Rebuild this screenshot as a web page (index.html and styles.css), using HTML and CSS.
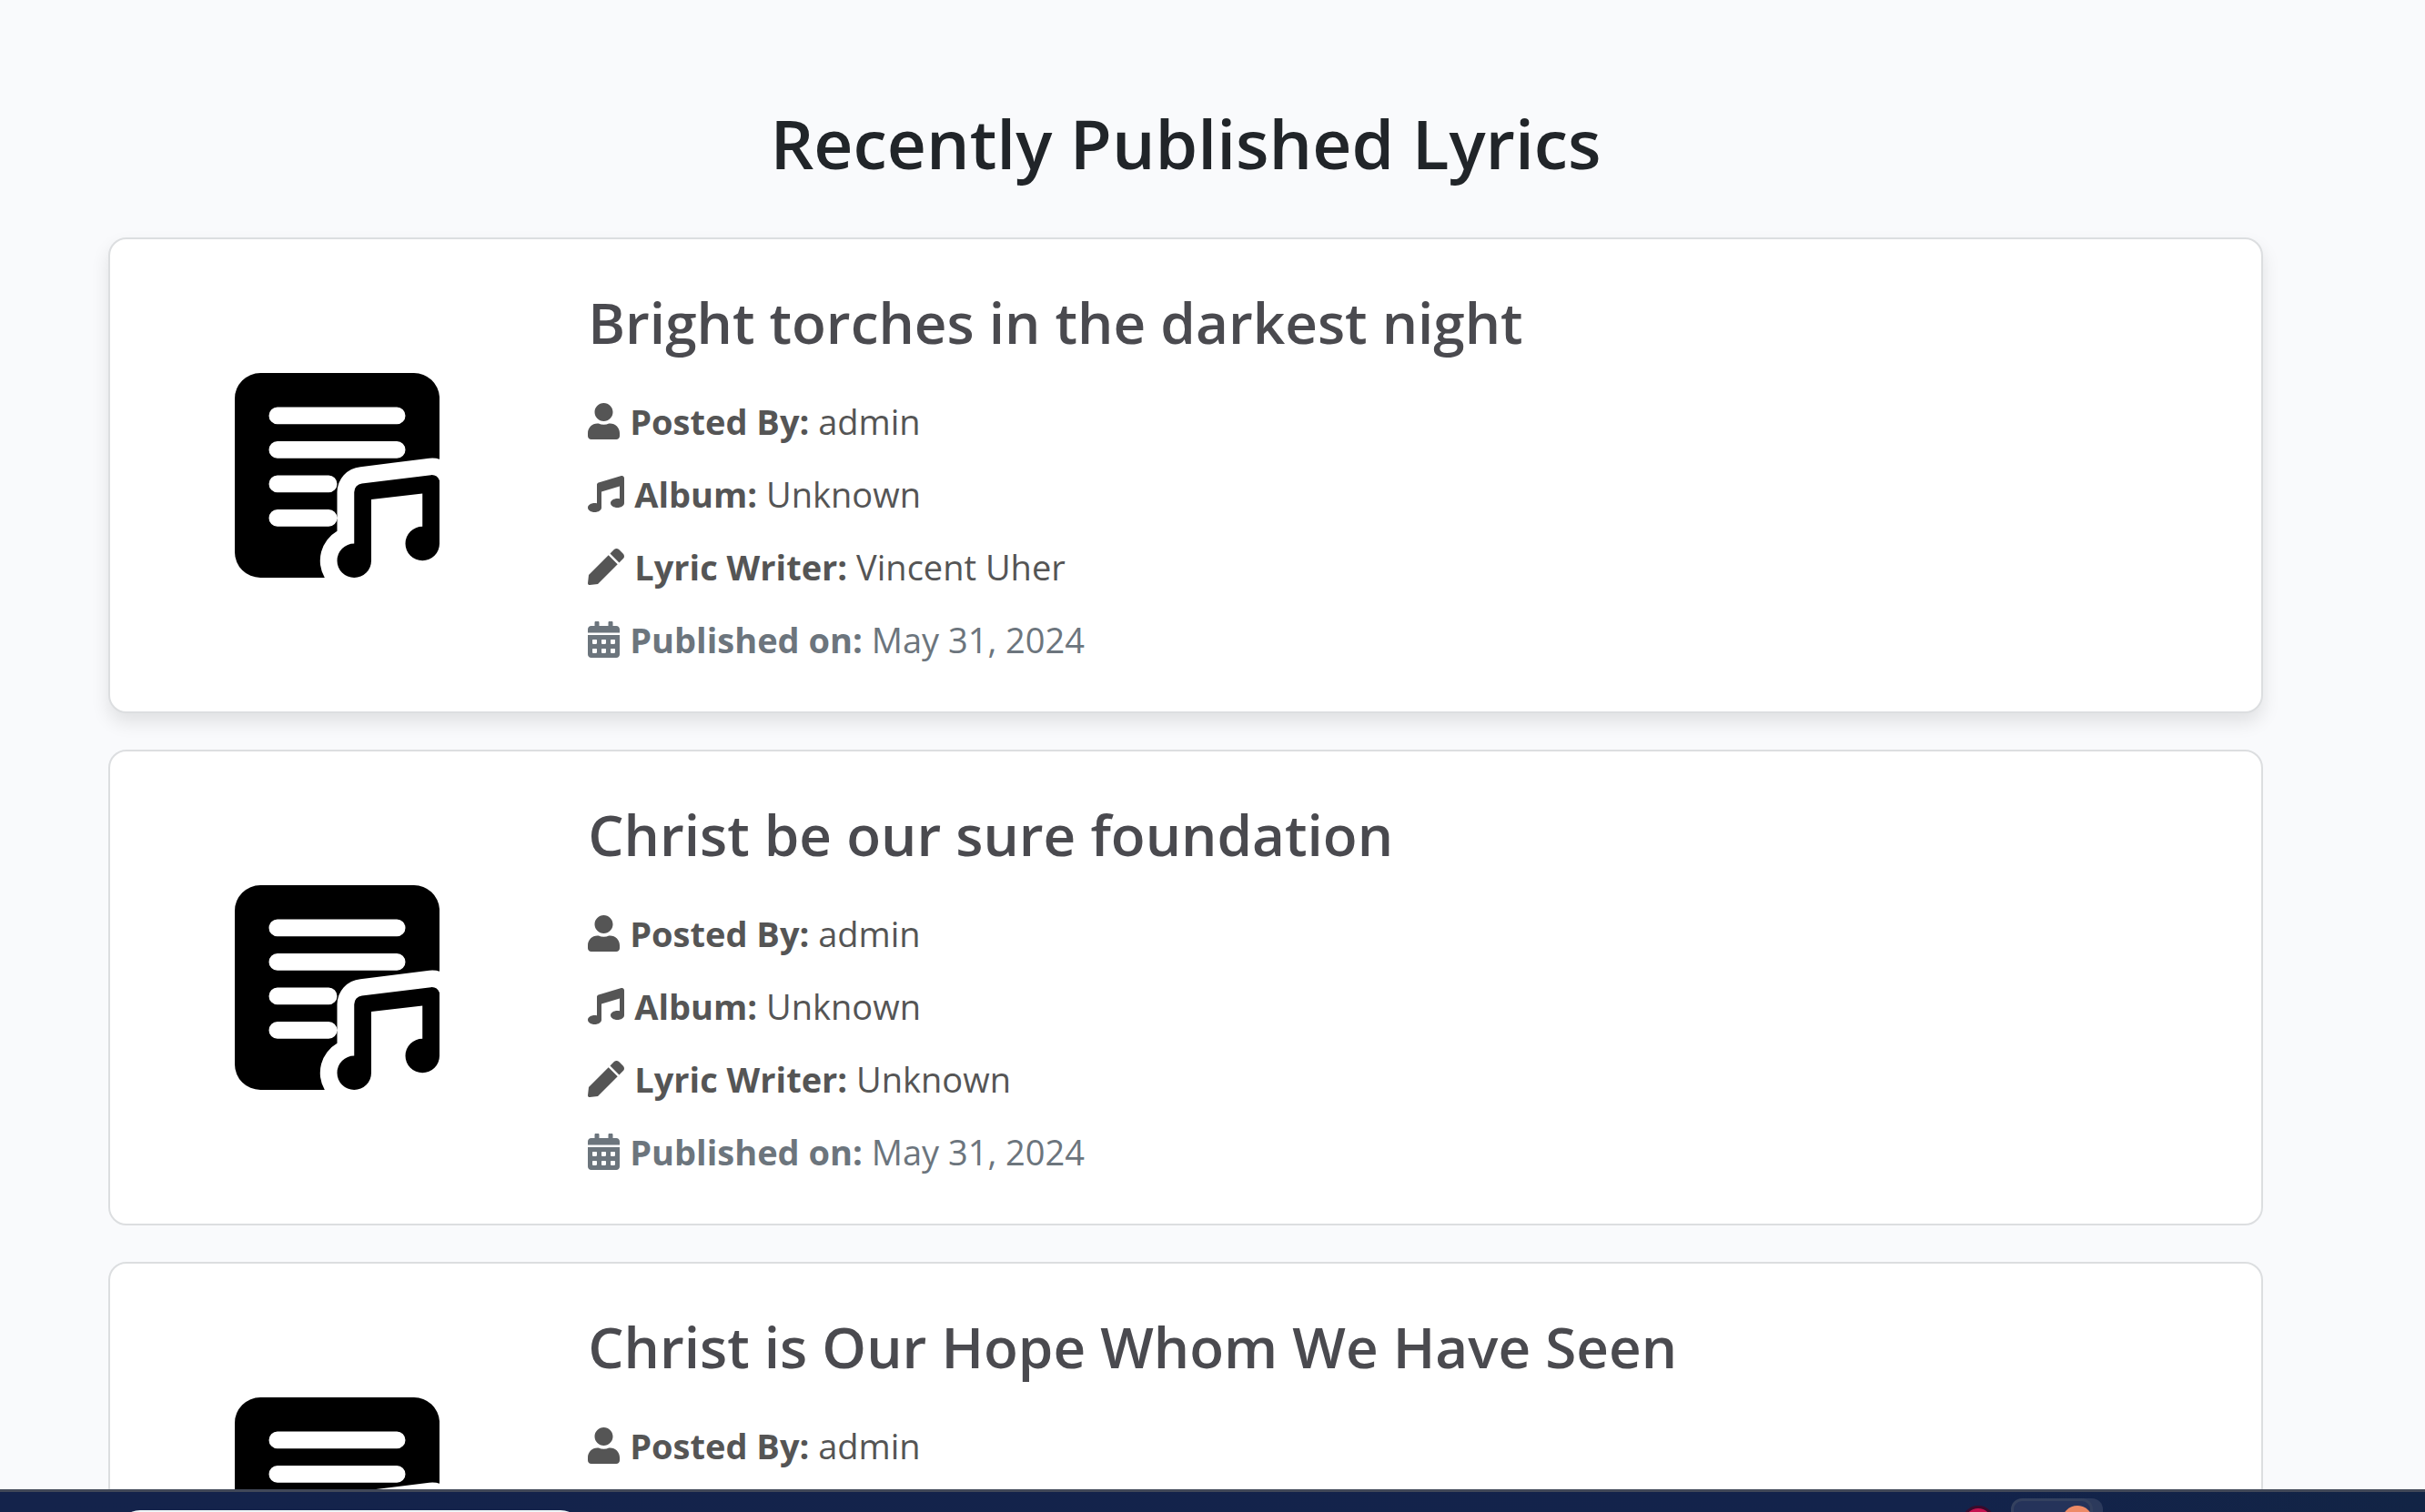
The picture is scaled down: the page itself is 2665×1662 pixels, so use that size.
FILE: index.html
```html
<!DOCTYPE html>
<html lang="en">
<head>
<meta charset="utf-8">
<title>Recently Published Lyrics</title>
<link rel="stylesheet" href="styles.css">
</head>
<body>
<svg class="sprite" aria-hidden="true">
  <symbol id="lyrics" viewBox="0 0 12 12">
    <path fill-rule="evenodd" d="M1.5 0h9A1.5 1.5 0 0 1 12 1.4V5.05Q11.75 4.97 11.4 5L7.36 5.5A1.5 1.5 0 0 0 6 7V9.27A2 2 0 0 0 5.27 12H1.5A1.5 1.5 0 0 1 0 10.5v-9A1.5 1.5 0 0 1 1.5 0zM2.5 2a.5.5 0 0 0 0 1h7a.5.5 0 0 0 0-1zM2.5 4a.5.5 0 0 0 0 1h7a.5.5 0 0 0 0-1zM2.5 6a.5.5 0 0 0 0 1h3a.5.5 0 0 0 0-1zM2.5 8a.5.5 0 0 0 0 1h3a.5.5 0 0 0 0-1z"/>
    <path d="M7.45 6.48L11.5 5.98A.5.5 0 0 1 12 6.3V10a1 1 0 1 1-1-1V7.06L8 7.41V11a1 1 0 1 1-1-1V6.98A.5.5 0 0 1 7.45 6.48z"/>
  </symbol>
  <symbol id="user" viewBox="0 0 448 512">
    <path d="M224 256c70.700 0 128-57.300 128-128S294.700 0 224 0 96 57.300 96 128s57.300 128 128 128zm89.600 32h-16.700c-22.200 10.200-46.900 16-72.900 16s-50.600-5.800-72.900-16h-16.700C60.200 288 0 348.200 0 422.400V464c0 26.500 21.500 48 48 48h352c26.500 0 48-21.500 48-48v-41.600c0-74.200-60.200-134.400-134.400-134.400z"/>
  </symbol>
  <symbol id="music" viewBox="0 0 512 512">
    <path d="M499.100 6.300c8.100 6 12.900 15.600 12.900 25.700V384c0 35.300-43 64-96 64s-96-28.700-96-64 43-64 96-64c11.200 0 22 1.300 32 3.700V147L192 223.800V448c0 35.300-43 64-96 64s-96-28.700-96-64 43-64 96-64c11.200 0 22 1.300 32 3.700V128c0-14.100 9.300-26.600 22.800-30.700l320-96c9.700-2.900 20.200-1.100 28.300 5z"/>
  </symbol>
  <symbol id="pen" viewBox="0 0 512 512">
    <path d="M290.740 93.240l128.020 128.020-277.990 277.990-114.140 12.600C11.350 513.540-1.560 500.620.140 485.340l12.700-114.220 277.900-277.880zm207.200-19.060l-60.110-60.110c-18.750-18.750-49.160-18.750-67.910 0l-56.550 56.550 128.020 128.020 56.550-56.550c18.750-18.760 18.750-49.160 0-67.910z"/>
  </symbol>
  <symbol id="calendar" viewBox="0 0 448 512">
    <path fill-rule="evenodd" d="M0 464c0 26.500 21.500 48 48 48h352c26.500 0 48-21.500 48-48V192H0v272zm320-196c0-6.600 5.400-12 12-12h40c6.600 0 12 5.400 12 12v40c0 6.600-5.400 12-12 12h-40c-6.600 0-12-5.400-12-12v-40zm0 128c0-6.600 5.400-12 12-12h40c6.600 0 12 5.400 12 12v40c0 6.600-5.400 12-12 12h-40c-6.600 0-12-5.400-12-12v-40zM192 268c0-6.600 5.400-12 12-12h40c6.600 0 12 5.400 12 12v40c0 6.600-5.400 12-12 12h-40c-6.600 0-12-5.400-12-12v-40zm0 128c0-6.600 5.400-12 12-12h40c6.600 0 12 5.400 12 12v40c0 6.600-5.400 12-12 12h-40c-6.600 0-12-5.400-12-12v-40zM64 268c0-6.600 5.400-12 12-12h40c6.600 0 12 5.400 12 12v40c0 6.600-5.400 12-12 12H76c-6.600 0-12-5.400-12-12v-40zm0 128c0-6.600 5.400-12 12-12h40c6.600 0 12 5.400 12 12v40c0 6.600-5.400 12-12 12H76c-6.600 0-12-5.400-12-12v-40zM400 64h-48V16c0-8.800-7.200-16-16-16h-32c-8.800 0-16 7.200-16 16v48H160V16c0-8.800-7.200-16-16-16h-32c-8.800 0-16 7.200-16 16v48H48C21.500 64 0 85.500 0 112v48h448v-48c0-26.500-21.500-48-48-48z"/>
  </symbol>
</svg>

<main class="page">
  <h1 class="heading">Recently Published Lyrics</h1>

  <article class="card card-raised">
    <svg class="cover" aria-hidden="true"><use href="#lyrics"/></svg>
    <div class="card-body">
      <h2 class="title">Bright torches in the darkest night</h2>
      <p class="meta"><svg class="icon narrow" aria-hidden="true"><use href="#user"/></svg><span><strong>Posted By:</strong> admin</span></p>
      <p class="meta"><svg class="icon" aria-hidden="true"><use href="#music"/></svg><span><strong>Album:</strong> Unknown</span></p>
      <p class="meta"><svg class="icon" aria-hidden="true"><use href="#pen"/></svg><span><strong>Lyric Writer:</strong> Vincent Uher</span></p>
      <p class="meta muted"><svg class="icon narrow" aria-hidden="true"><use href="#calendar"/></svg><span><strong>Published on:</strong> May 31, 2024</span></p>
    </div>
  </article>

  <article class="card">
    <svg class="cover" aria-hidden="true"><use href="#lyrics"/></svg>
    <div class="card-body">
      <h2 class="title">Christ be our sure foundation</h2>
      <p class="meta"><svg class="icon narrow" aria-hidden="true"><use href="#user"/></svg><span><strong>Posted By:</strong> admin</span></p>
      <p class="meta"><svg class="icon" aria-hidden="true"><use href="#music"/></svg><span><strong>Album:</strong> Unknown</span></p>
      <p class="meta"><svg class="icon" aria-hidden="true"><use href="#pen"/></svg><span><strong>Lyric Writer:</strong> Unknown</span></p>
      <p class="meta muted"><svg class="icon narrow" aria-hidden="true"><use href="#calendar"/></svg><span><strong>Published on:</strong> May 31, 2024</span></p>
    </div>
  </article>

  <article class="card">
    <svg class="cover" aria-hidden="true"><use href="#lyrics"/></svg>
    <div class="card-body">
      <h2 class="title">Christ is Our Hope Whom We Have Seen</h2>
      <p class="meta"><svg class="icon narrow" aria-hidden="true"><use href="#user"/></svg><span><strong>Posted By:</strong> admin</span></p>
      <p class="meta"><svg class="icon" aria-hidden="true"><use href="#music"/></svg><span><strong>Album:</strong> Unknown</span></p>
      <p class="meta"><svg class="icon" aria-hidden="true"><use href="#pen"/></svg><span><strong>Lyric Writer:</strong> Unknown</span></p>
      <p class="meta muted"><svg class="icon narrow" aria-hidden="true"><use href="#calendar"/></svg><span><strong>Published on:</strong> May 31, 2024</span></p>
    </div>
  </article>
</main>

<footer class="taskbar">
  <input class="search" type="search" aria-label="Search">
  <div class="apps">
    <span class="app-red"></span>
    <span class="app-tile"><span class="app-face"></span></span>
  </div>
</footer>
</body>
</html>
```
FILE: styles.css
```css
* {
  box-sizing: border-box;
}

body {
  margin: 0;
  height: 100vh;
  display: flex;
  flex-direction: column;
  overflow: hidden;
  background: #f9fafc;
  color: #212529;
  font: 38px/60px "Segoe UI", "Open Sans", "Noto Sans", sans-serif;
}

.sprite {
  display: none;
}

.page {
  flex: 1;
  min-height: 0;
  overflow: hidden;
  padding: 109px 178px 0 119px;
}

.heading {
  margin: 0 0 56px;
  font-size: 75px;
  line-height: 96px;
  font-weight: 600;
  text-align: center;
}

.card {
  display: grid;
  grid-template-columns: 21% 1fr;
  align-items: center;
  margin-bottom: 40px;
  padding-left: 1px;
  border: 2px solid #dcdee0;
  border-radius: 20px;
  background: #fff;
}

.card-raised {
  box-shadow: 0 10px 20px rgba(0, 0, 0, 0.1);
}

.cover {
  width: 225px;
  height: 225px;
  justify-self: center;
}

.card-body {
  padding: 51px 28px 49px;
}

.title {
  margin: 0 0 39px;
  color: #4a4a4f;
  font-size: 62px;
  line-height: 80px;
  font-weight: 600;
}

.meta {
  display: flex;
  align-items: center;
  gap: 11px;
  margin: 0 0 20px;
  color: #555;
}

.meta:last-child {
  margin-bottom: 0;
}

.muted {
  color: #6c757d;
}

.icon {
  width: 40px;
  height: 40px;
  fill: currentColor;
}

.narrow {
  width: 35px;
}

.taskbar {
  display: flex;
  flex: none;
  justify-content: space-between;
  height: 25px;
  padding: 0 365px 0 130px;
  overflow: hidden;
  border-top: 3px solid #414858;
  background: linear-gradient(90deg, #14234b, #13234b 80%, #122445);
}

.search {
  width: 510px;
  height: 80px;
  margin-top: 20px;
  border: 0;
  border-radius: 24px;
  background: #eef5f8;
}

.apps {
  display: flex;
  align-items: flex-start;
  gap: 18px;
}

.app-red {
  width: 36px;
  height: 36px;
  margin-top: 15px;
  border: 3px solid #3a0a2c;
  border-radius: 50%;
  background: #c4124f;
}

.app-tile {
  width: 90px;
  height: 90px;
  margin-top: 7px;
  padding: 5px 0 0 53px;
  border: 3px solid #34415f;
  border-radius: 12px;
  background: #25335a;
  box-shadow: 11px 0 0 #2c3a5c;
}

.app-face {
  display: block;
  width: 34px;
  height: 34px;
  border-radius: 50%;
  background: #ee8a66;
}
```
